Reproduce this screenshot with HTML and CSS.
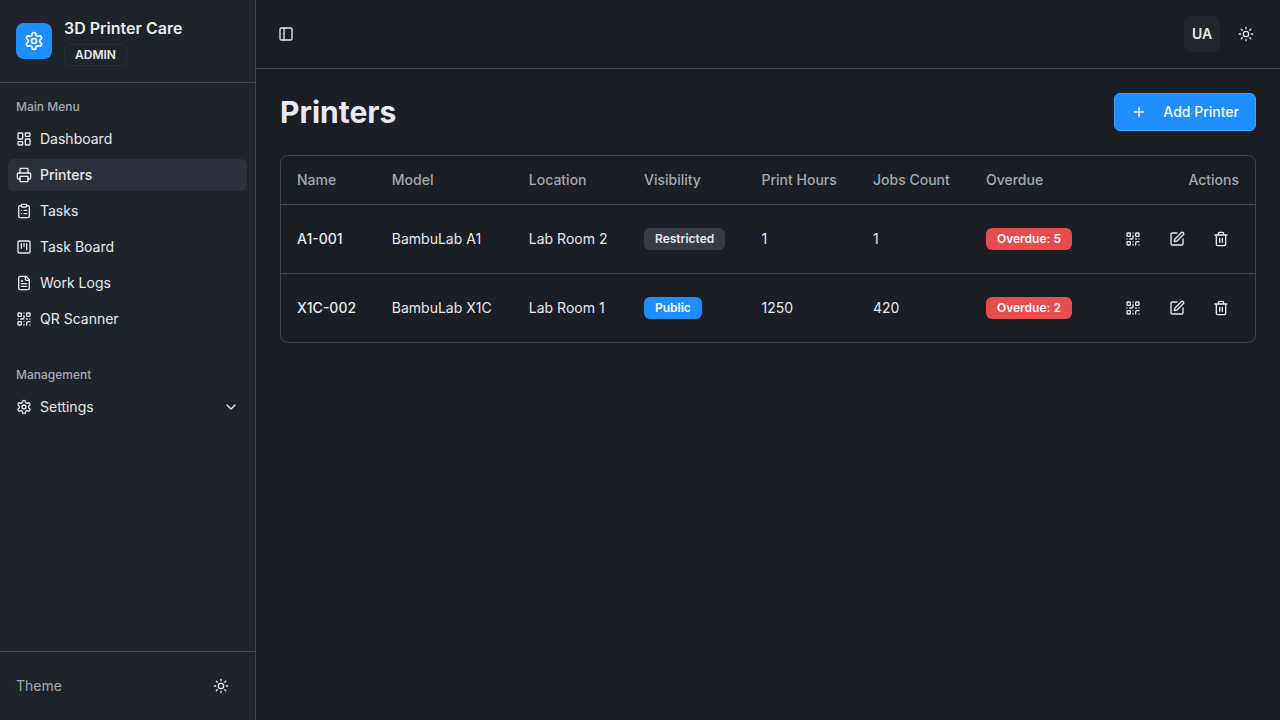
FILE: index.html
```html
<!DOCTYPE html>
<html lang="en">
<head>
<meta charset="utf-8">
<title>3D Printer Care</title>
<link rel="stylesheet" href="styles.css">
</head>
<body>
<svg class="sprite" aria-hidden="true">
  <symbol id="settings" viewBox="0 0 24 24"><path d="M12.22 2h-.44a2 2 0 0 0-2 2v.18a2 2 0 0 1-1 1.73l-.43.25a2 2 0 0 1-2 0l-.15-.08a2 2 0 0 0-2.73.73l-.22.38a2 2 0 0 0 .73 2.73l.15.1a2 2 0 0 1 1 1.72v.51a2 2 0 0 1-1 1.74l-.15.09a2 2 0 0 0-.73 2.73l.22.38a2 2 0 0 0 2.73.73l.15-.08a2 2 0 0 1 2 0l.43.25a2 2 0 0 1 1 1.73V20a2 2 0 0 0 2 2h.44a2 2 0 0 0 2-2v-.18a2 2 0 0 1 1-1.73l.43-.25a2 2 0 0 1 2 0l.15.08a2 2 0 0 0 2.73-.73l.22-.39a2 2 0 0 0-.73-2.73l-.15-.08a2 2 0 0 1-1-1.74v-.5a2 2 0 0 1 1-1.74l.15-.09a2 2 0 0 0 .73-2.73l-.22-.38a2 2 0 0 0-2.73-.73l-.15.08a2 2 0 0 1-2 0l-.43-.25a2 2 0 0 1-1-1.73V4a2 2 0 0 0-2-2z"/><circle cx="12" cy="12" r="3"/></symbol>
  <symbol id="dashboard" viewBox="0 0 24 24"><rect width="7" height="9" x="3" y="3" rx="1"/><rect width="7" height="5" x="14" y="3" rx="1"/><rect width="7" height="9" x="14" y="12" rx="1"/><rect width="7" height="5" x="3" y="16" rx="1"/></symbol>
  <symbol id="printer" viewBox="0 0 24 24"><path d="M6 18H4a2 2 0 0 1-2-2v-5a2 2 0 0 1 2-2h16a2 2 0 0 1 2 2v5a2 2 0 0 1-2 2h-2"/><path d="M6 9V3a1 1 0 0 1 1-1h10a1 1 0 0 1 1 1v6"/><rect x="6" y="14" width="12" height="8" rx="1"/></symbol>
  <symbol id="clipboard" viewBox="0 0 24 24"><rect width="8" height="4" x="8" y="2" rx="1"/><path d="M16 4h2a2 2 0 0 1 2 2v14a2 2 0 0 1-2 2H6a2 2 0 0 1-2-2V6a2 2 0 0 1 2-2h2"/><path d="M12 11h4M12 16h4M8 11h.01M8 16h.01"/></symbol>
  <symbol id="kanban" viewBox="0 0 24 24"><rect width="18" height="18" x="3" y="3" rx="2"/><path d="M8 7v7M12 7v4M16 7v9"/></symbol>
  <symbol id="file" viewBox="0 0 24 24"><path d="M15 2H6a2 2 0 0 0-2 2v16a2 2 0 0 0 2 2h12a2 2 0 0 0 2-2V7Z"/><path d="M14 2v4a2 2 0 0 0 2 2h4M10 9H8M16 13H8M16 17H8"/></symbol>
  <symbol id="qr" viewBox="0 0 24 24"><rect width="5" height="5" x="3" y="3" rx="1"/><rect width="5" height="5" x="16" y="3" rx="1"/><rect width="5" height="5" x="3" y="16" rx="1"/><path d="M21 16h-3a2 2 0 0 0-2 2v3M21 21v.01M12 7v3a2 2 0 0 1-2 2H7M3 12h.01M12 3h.01M12 16v.01M16 12h1M21 12v.01M12 21v-1"/></symbol>
  <symbol id="chevron" viewBox="0 0 24 24"><path d="m6 9 6 6 6-6"/></symbol>
  <symbol id="sun" viewBox="0 0 24 24"><circle cx="12" cy="12" r="4"/><path d="M12 2v2M12 20v2M4.93 4.93l1.41 1.41M17.66 17.66l1.41 1.41M2 12h2M20 12h2M6.34 17.66l-1.41 1.41M19.07 4.93l-1.41 1.41"/></symbol>
  <symbol id="panel" viewBox="0 0 24 24"><rect width="18" height="18" x="3" y="3" rx="2"/><path d="M9 3v18"/></symbol>
  <symbol id="plus" viewBox="0 0 24 24"><path d="M5 12h14M12 5v14"/></symbol>
  <symbol id="edit" viewBox="0 0 24 24"><path d="M12 3H5a2 2 0 0 0-2 2v14a2 2 0 0 0 2 2h14a2 2 0 0 0 2-2v-7"/><path d="M18.375 2.625a1 1 0 0 1 3 3l-9.013 9.014a2 2 0 0 1-.853.505l-2.873.84a.5.5 0 0 1-.62-.62l.84-2.873a2 2 0 0 1 .506-.852z"/></symbol>
  <symbol id="trash" viewBox="0 0 24 24"><path d="M3 6h18M19 6v14c0 1-1 2-2 2H7c-1 0-2-1-2-2V6M8 6V4c0-1 1-2 2-2h4c1 0 2 1 2 2v2M10 11v6M14 11v6"/></symbol>
</svg>
<div class="app">
  <aside class="sidebar">
    <div class="brand">
      <div class="logo"><svg class="icon icon-lg"><use href="#settings"/></svg></div>
      <div class="brand-text">
        <div class="brand-name">3D Printer Care</div>
        <span class="badge badge-outline">ADMIN</span>
      </div>
    </div>
    <nav class="nav">
      <section class="group">
        <div class="group-label">Main Menu</div>
        <div class="items">
          <a class="item"><svg class="icon"><use href="#dashboard"/></svg>Dashboard</a>
          <a class="item active"><svg class="icon"><use href="#printer"/></svg>Printers</a>
          <a class="item"><svg class="icon"><use href="#clipboard"/></svg>Tasks</a>
          <a class="item"><svg class="icon"><use href="#kanban"/></svg>Task Board</a>
          <a class="item"><svg class="icon"><use href="#file"/></svg>Work Logs</a>
          <a class="item"><svg class="icon"><use href="#qr"/></svg>QR Scanner</a>
        </div>
      </section>
      <section class="group">
        <div class="group-label">Management</div>
        <div class="items">
          <a class="item"><svg class="icon"><use href="#settings"/></svg>Settings<svg class="icon chevron"><use href="#chevron"/></svg></a>
        </div>
      </section>
    </nav>
    <div class="sidebar-footer">
      <span>Theme</span>
      <button class="icon-button"><svg class="icon"><use href="#sun"/></svg></button>
    </div>
  </aside>
  <div class="content">
    <header class="topbar">
      <button class="icon-button small"><svg class="icon"><use href="#panel"/></svg></button>
      <div class="topbar-right">
        <button class="icon-button language">UA</button>
        <button class="icon-button"><svg class="icon"><use href="#sun"/></svg></button>
      </div>
    </header>
    <main class="page">
      <div class="page-head">
        <h1>Printers</h1>
        <button class="add-button"><svg class="icon"><use href="#plus"/></svg>Add Printer</button>
      </div>
      <div class="card">
        <table>
          <colgroup><col class="c-name"><col class="c-model"><col class="c-location"><col class="c-visibility"><col class="c-hours"><col class="c-jobs"><col class="c-overdue"><col></colgroup>
          <thead>
            <tr><th>Name</th><th>Model</th><th>Location</th><th>Visibility</th><th>Print Hours</th><th>Jobs Count</th><th>Overdue</th><th class="right">Actions</th></tr>
          </thead>
          <tbody>
            <tr>
              <td class="name">A1-001</td><td>BambuLab A1</td><td>Lab Room 2</td><td><span class="badge badge-muted">Restricted</span></td><td>1</td><td>1</td><td><span class="badge badge-danger">Overdue: 5</span></td>
              <td><div class="actions"><button class="icon-button"><svg class="icon"><use href="#qr"/></svg></button><button class="icon-button"><svg class="icon"><use href="#edit"/></svg></button><button class="icon-button"><svg class="icon"><use href="#trash"/></svg></button></div></td>
            </tr>
            <tr>
              <td class="name">X1C-002</td><td>BambuLab X1C</td><td>Lab Room 1</td><td><span class="badge badge-primary">Public</span></td><td>1250</td><td>420</td><td><span class="badge badge-danger">Overdue: 2</span></td>
              <td><div class="actions"><button class="icon-button"><svg class="icon"><use href="#qr"/></svg></button><button class="icon-button"><svg class="icon"><use href="#edit"/></svg></button><button class="icon-button"><svg class="icon"><use href="#trash"/></svg></button></div></td>
            </tr>
          </tbody>
        </table>
      </div>
    </main>
  </div>
</div>
</body>
</html>
```
FILE: styles.css
```css
:root {
  --bg: #1b1e25;
  --sidebar: #1f242a;
  --border: #42454e;
  --text: #e8eaed;
  --muted: #a4a8b0;
  --primary: #1f8fff;
}
* { box-sizing: border-box; }
body {
  margin: 0;
  background: var(--bg);
  color: var(--text);
  font: 14px/20px Inter, sans-serif;
}
button { font: inherit; color: inherit; border: 0; background: none; padding: 0; }
h1 { margin: 0; font-size: 30px; line-height: 36px; font-weight: 700; }
.sprite { display: none; }
.icon {
  width: 16px;
  height: 16px;
  flex: none;
  fill: none;
  stroke: currentColor;
  stroke-width: 2;
  stroke-linecap: round;
  stroke-linejoin: round;
}
.icon-lg { width: 20px; height: 20px; }
.app { display: flex; height: 100vh; }
.sidebar {
  width: 256px;
  flex: none;
  display: flex;
  flex-direction: column;
  background: var(--sidebar);
  border-right: 1px solid var(--border);
}
.brand {
  display: flex;
  align-items: center;
  gap: 12px;
  padding: 16px;
  border-bottom: 1px solid var(--border);
}
.logo {
  width: 36px;
  height: 36px;
  border-radius: 8px;
  display: grid;
  place-items: center;
  background: var(--primary);
  color: #fff;
}
.brand-text { display: flex; flex-direction: column; align-items: flex-start; gap: 4px; }
.brand-name { font-size: 16px; line-height: 24px; font-weight: 600; }
.badge {
  display: inline-flex;
  align-items: center;
  height: 22px;
  padding: 2px 10px;
  border: 1px solid transparent;
  border-radius: 6px;
  font-size: 12px;
  line-height: 16px;
  font-weight: 600;
  white-space: nowrap;
  vertical-align: middle;
}
.badge-outline { border-color: #292d34; }
.badge-muted { background: #383b45; }
.badge-primary { background: var(--primary); color: #fafafa; }
.badge-danger { background: #e84d4d; color: #fafafa; }
.nav { flex: 1; display: flex; flex-direction: column; gap: 8px; }
.group { padding: 8px; }
.group-label {
  height: 32px;
  padding: 0 8px;
  display: flex;
  align-items: center;
  font-size: 12px;
  line-height: 16px;
  font-weight: 500;
  color: var(--muted);
}
.items { display: flex; flex-direction: column; gap: 4px; }
.item { display: flex; align-items: center; gap: 8px; height: 32px; padding: 8px; border-radius: 6px; }
.active { background: #2c303b; font-weight: 500; }
.chevron { margin-left: auto; }
.sidebar-footer {
  display: flex;
  align-items: center;
  justify-content: space-between;
  padding: 16px;
  border-top: 1px solid var(--border);
  color: var(--muted);
}
.icon-button {
  width: 36px;
  height: 36px;
  border-radius: 6px;
  display: inline-flex;
  align-items: center;
  justify-content: center;
  color: var(--text);
}
.small { width: 28px; height: 28px; }
.language { background: #23262d; font-weight: 600; }
.content { flex: 1; min-width: 0; }
.topbar {
  display: flex;
  align-items: center;
  justify-content: space-between;
  padding: 16px;
  border-bottom: 1px solid var(--border);
}
.topbar-right { display: flex; gap: 8px; }
.page { padding: 24px; display: flex; flex-direction: column; gap: 24px; }
.page-head { display: flex; align-items: center; justify-content: space-between; }
.add-button {
  display: flex;
  align-items: center;
  gap: 16px;
  height: 38px;
  padding: 0 16px;
  border: 1px solid #48a2ff;
  border-radius: 6px;
  background: var(--primary);
  color: #fafafa;
  font-weight: 500;
}
.card { border: 1px solid var(--border); border-radius: 8px; }
table { width: 100%; table-layout: fixed; border-spacing: 0; }
th { height: 49px; padding: 0 16px; text-align: left; font-weight: 500; color: var(--muted); border-bottom: 1px solid var(--border); }
td { height: 69px; padding: 0 16px; border-bottom: 1px solid var(--border); }
tbody tr:last-child td { height: 68px; border-bottom: 0; }
.name { font-weight: 500; }
.right { text-align: right; }
.actions { display: flex; justify-content: flex-end; gap: 8px; }
.c-name { width: 94.8px; }
.c-model { width: 137px; }
.c-location { width: 115.2px; }
.c-visibility { width: 117.5px; }
.c-hours { width: 111.5px; }
.c-jobs { width: 113px; }
.c-overdue { width: 118px; }
```
